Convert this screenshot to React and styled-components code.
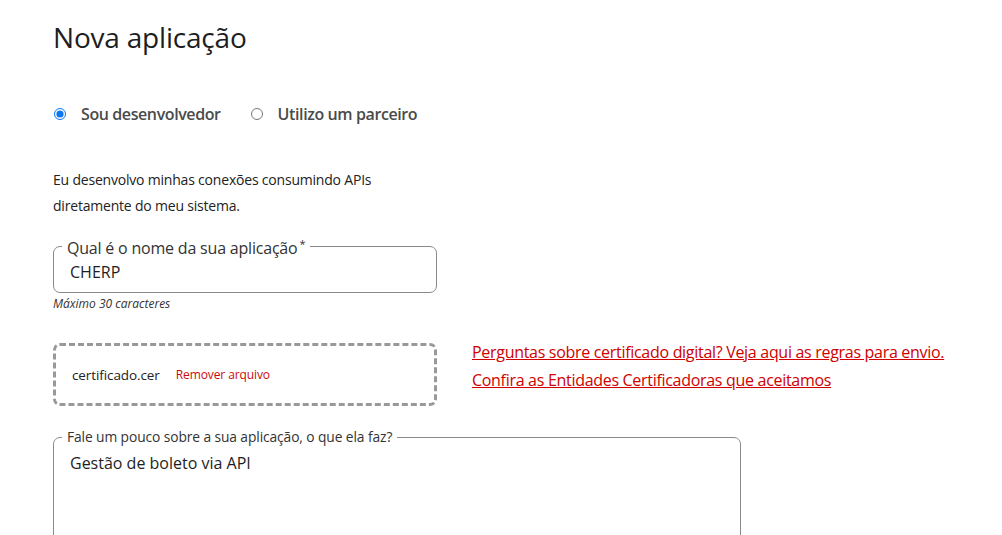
import React from "react";
import styled, { createGlobalStyle } from "styled-components";

const Global = createGlobalStyle`
	body{
		margin:0;
		background:#fff;
		font-family:"Open Sans", "Liberation Sans", sans-serif;
		color:#222;
	}
`;

const App = () => {
	return (
		<>
			<Global />
			<Page>
				<Title>Nova aplicação</Title>

				<RadioGroup>
					<RadioLabel>
						<input type="radio" name="tipo" defaultChecked />
						<span>Sou desenvolvedor</span>
					</RadioLabel>
					<RadioLabel>
						<input type="radio" name="tipo" />
						<span>Utilizo um parceiro</span>
					</RadioLabel>
				</RadioGroup>

				<Description>
					Eu desenvolvo minhas conexões consumindo APIs
					<br />
					diretamente do meu sistema.
				</Description>

				<Field width="384px" height="57px" top="17px">
					<Legend>
						Qual é o nome da sua aplicação<sup>*</sup>
					</Legend>
					<Value>CHERP</Value>
				</Field>
				<Helper>Máximo 30 caracteres</Helper>

				<UploadRow>
					<Dropzone>
						<FileName>certificado.cer</FileName>
						<RemoveLink>Remover arquivo</RemoveLink>
					</Dropzone>
					<Links>
						<RedLink href="#">Perguntas sobre certificado digital? Veja aqui as regras para envio.</RedLink>
						<RedLink href="#">Confira as Entidades Certificadoras que aceitamos</RedLink>
					</Links>
				</UploadRow>

				<Field width="688px" height="140px" top="23px">
					<Legend small>Fale um pouco sobre a sua aplicação, o que ela faz?</Legend>
					<Value spaced>Gestão de boleto via API</Value>
				</Field>
			</Page>
		</>
	);
};

const Page = styled.div`
	padding:17px 53px 0;
	height:535px;
	box-sizing:border-box;
	overflow:hidden;
`;

const Title = styled.h1`
	margin:0;
	font-size:28px;
	font-weight:400;
	line-height:40px;
	color:#1e1e1e;
	letter-spacing:-0.2px;
`;

const RadioGroup = styled.div`
	display:flex;
	gap:29px;
	margin-top:46px;
`;

const RadioLabel = styled.label`
	display:flex;
	align-items:center;
	gap:15px;
	font-size:16px;
	font-weight:600;
	color:#4a4a4a;
	letter-spacing:-0.4px;
	input{
		margin:0 0 0 1px;
		width:12px;
		height:12px;
		accent-color:#0b75f2;
	}
`;

const Description = styled.p`
	margin:42px 0 0;
	font-size:14px;
	line-height:26px;
	color:#222;
	letter-spacing:-0.2px;
`;

const Field = styled.fieldset`
	box-sizing:border-box;
	margin:${(p) => p.top} 0 0;
	padding:0 16px;
	width:${(p) => p.width};
	height:${(p) => p.height};
	flex-shrink:0;
	border:1px solid #8a8a8a;
	border-radius:7px;
`;

const Legend = styled.legend`
	padding:0 5px;
	margin-left:-8px;
	font-size:${(p) => (p.small ? "13.8px" : "16px")};
	color:#333;
	line-height:16px;
	letter-spacing:${(p) => (p.small ? "-0.1px" : "-0.2px")};
	sup{
		font-size:11px;
		margin-left:2px;
	}
`;

const Value = styled.div`
	font-size:16px;
	color:#1e1e1e;
	line-height:22px;
	padding-top:${(p) => (p.spaced ? "7px" : "5px")};
`;

const Helper = styled.div`
	margin-top:2px;
	font-size:12px;
	font-style:italic;
	color:#333;
`;

const UploadRow = styled.div`
	display:flex;
	align-items:flex-start;
	gap:35px;
	margin-top:31px;
`;

const Dropzone = styled.div`
	box-sizing:border-box;
	width:384px;
	height:63px;
	border:3px dashed #999;
	border-radius:7px;
	display:flex;
	align-items:center;
	gap:16px;
	padding:0 16px;
`;

const FileName = styled.span`
	font-size:13.5px;
	color:#222;
	letter-spacing:-0.1px;
`;

const RemoveLink = styled.span`
	font-size:12px;
	color:#cc0a0a;
	letter-spacing:-0.1px;
`;

const Links = styled.div`
	display:flex;
	flex-direction:column;
	gap:6px;
	margin-top:-2px;
`;

const RedLink = styled.a`
	font-size:16px;
	line-height:22px;
	color:#d00000;
	text-decoration:underline;
	letter-spacing:-0.3px;
`;

export default App;
